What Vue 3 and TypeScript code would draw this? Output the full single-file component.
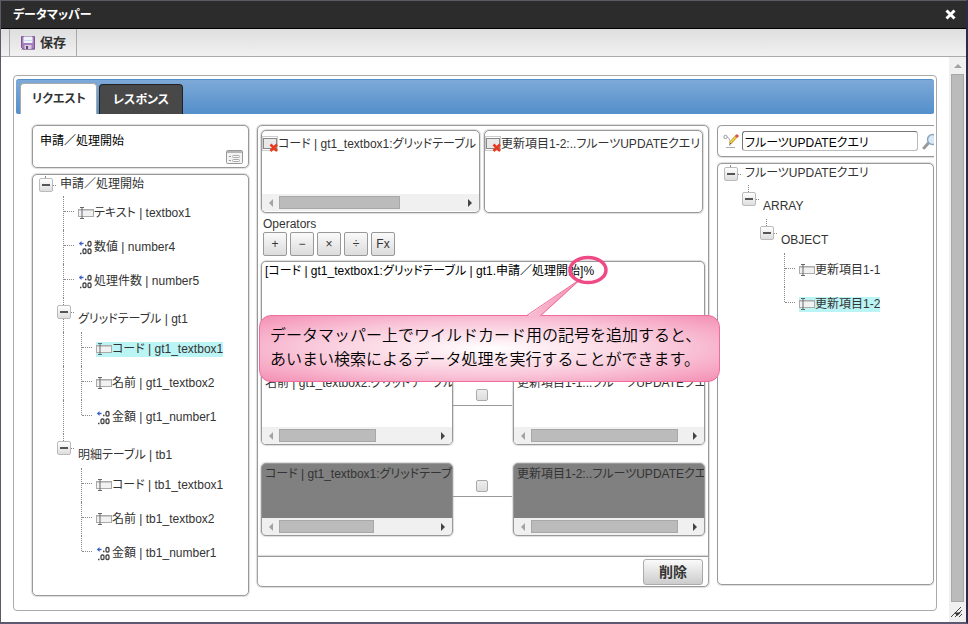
<script setup lang="ts">
import { ref } from 'vue'

type Kind = 'folder' | 'text' | 'number'

interface TreeRow {
  id: string
  label: string
  kind: Kind
  depth: number
  rails?: number[]
  last?: boolean
  joined?: boolean
  selected?: boolean
}

interface Mapping {
  id: string
  from: string
  to: string
  fromThumb: number
  toThumb: number
  active: boolean
}

const sourceTree: TreeRow[] = [
  { id: 's0', label: '申請／処理開始', kind: 'folder', depth: 0, last: true },
  { id: 's1', label: 'テキスト | textbox1', kind: 'text', depth: 1 },
  { id: 's2', label: '数値 | number4', kind: 'number', depth: 1 },
  { id: 's3', label: '処理件数 | number5', kind: 'number', depth: 1 },
  { id: 's4', label: 'グリッドテーブル | gt1', kind: 'folder', depth: 1, joined: true },
  { id: 's5', label: 'コード | gt1_textbox1', kind: 'text', depth: 2, rails: [2], selected: true },
  { id: 's6', label: '名前 | gt1_textbox2', kind: 'text', depth: 2, rails: [2] },
  { id: 's7', label: '金額 | gt1_number1', kind: 'number', depth: 2, rails: [2], last: true },
  { id: 's8', label: '明細テーブル | tb1', kind: 'folder', depth: 1, joined: true, last: true },
  { id: 's9', label: 'コード | tb1_textbox1', kind: 'text', depth: 2 },
  { id: 's10', label: '名前 | tb1_textbox2', kind: 'text', depth: 2 },
  { id: 's11', label: '金額 | tb1_number1', kind: 'number', depth: 2, last: true },
]

const targetTree: TreeRow[] = [
  { id: 't0', label: 'フルーツUPDATEクエリ', kind: 'folder', depth: 0, last: true },
  { id: 't1', label: 'ARRAY', kind: 'folder', depth: 1, last: true },
  { id: 't2', label: 'OBJECT', kind: 'folder', depth: 2, last: true },
  { id: 't3', label: '更新項目1-1', kind: 'text', depth: 3 },
  { id: 't4', label: '更新項目1-2', kind: 'text', depth: 3, last: true, selected: true },
]

const trees = { source: sourceTree, target: targetTree }

const operators = ['+', '−', '×', '÷', 'Fx']

const mappings: Mapping[] = [
  {
    id: 'm1',
    from: '名前 | gt1_textbox2:グリッドテーブル',
    to: '更新項目1-1:..フルーツUPDATEクエリ',
    fromThumb: 62,
    toThumb: 94,
    active: false,
  },
  {
    id: 'm2',
    from: 'コード | gt1_textbox1:グリッドテーブル',
    to: '更新項目1-2:..フルーツUPDATEクエリ',
    fromThumb: 61,
    toThumb: 94,
    active: true,
  },
]

const expression = ref('[コード | gt1_textbox1:グリッドテーブル | gt1.申請／処理開始]%')
const query = ref('フルーツUPDATEクエリ')
const tab = ref<'request' | 'response'>('request')
const checked = ref<string[]>([])
</script>

<template>
  <div class="window">
    <header class="titlebar">
      <h1>データマッパー</h1>
      <button class="close" type="button" aria-label="閉じる">
        <svg width="11" height="11" viewBox="0 0 11 11"><path d="M1.500 1.500L9.500 9.500M9.500 1.500L1.500 9.500" stroke="#fff" stroke-width="3" /></svg>
      </button>
    </header>

    <div class="toolbar">
      <button class="save" type="button">
        <svg width="16" height="16" viewBox="0 0 16 16">
          <path d="M1 14.500H15" stroke="#bbb" />
          <path d="M1.500 1.500H14.500V14H3L1.500 12.500Z" fill="#a77cbd" stroke="#7d5792" />
          <path d="M3.500 1.500H12.500V8H3.500Z" fill="#eef4fa" />
          <path d="M3.500 5.500H12.500" stroke="#cfdbe8" />
          <path d="M4.500 10H11.500V14H4.500Z" fill="#d8cde0" />
          <path d="M6 11H8V14H6Z" fill="#5f4570" />
        </svg>
        <span>保存</span>
      </button>
    </div>

    <div class="viewport">
      <main class="stage">
        <div class="panel">
          <div class="tabs" role="tablist">
            <button class="tab" :class="{ on: tab === 'request' }" role="tab" type="button" @click="tab = 'request'">リクエスト</button>
            <button class="tab" :class="{ on: tab === 'response' }" role="tab" type="button" @click="tab = 'response'">レスポンス</button>
          </div>

          <div class="columns">
            <section class="column side left">
              <div class="box head">
                <span>申請／処理開始</span>
                <svg class="form-icon" width="17" height="14" viewBox="0 0 17 14">
                  <rect x=".5" y=".5" width="16" height="13" rx="1" fill="#f3f3f3" stroke="#999" />
                  <path d="M1 2H16" stroke="#b5b5b5" stroke-width="2" />
                  <path d="M3 6.500H5M3 10.500H5" stroke="#999" />
                  <rect x="6.500" y="5.500" width="7" height="2" rx="1" fill="#fff" stroke="#aaa" />
                  <rect x="6.500" y="9.500" width="7" height="2" rx="1" fill="#fff" stroke="#aaa" />
                </svg>
              </div>
              <ul class="box tree">
                <li v-for="row in trees.source" :key="row.id" class="row" :class="[row.kind, { root: row.depth === 0, leaf: row.kind !== 'folder' }]">
                  <span v-for="n in row.depth" :key="n" class="rail" :class="{ drawn: row.rails?.includes(n) }"></span>
                  <template v-if="row.kind === 'folder'">
                    <span class="knot" :class="{ joined: row.joined, last: row.last }">
                      <button class="toggle" type="button" :aria-label="row.label + 'を閉じる'"></button>
                    </span>
                    <span class="stub"></span>
                    <span class="name">{{ row.label }}</span>
                  </template>
                  <template v-else>
                    <span class="branch" :class="{ last: row.last }"></span>
                    <span class="item" :class="{ selected: row.selected }">
                      <svg v-if="row.kind === 'text'" width="16" height="14" viewBox="0 0 16 14">
                        <rect x=".5" y="3.500" width="15" height="7" fill="#f1f1f1" stroke="#aaa" />
                        <path d="M1 4.500H15" stroke="#ccc" />
                        <path d="M2 1.500H6M2 12.500H6M4 2V12" stroke="#666" fill="none" />
                      </svg>
                      <svg v-else width="16" height="16" viewBox="0 0 16 16">
                        <path d="M1.500 4.500H5.500" stroke="#3a5fc4" stroke-width="1.400" />
                        <path d="M1 4.500L3.500 2V7Z" fill="#3a5fc4" />
                        <path d="M7 6.500H8.500M2 14.500H3.500" stroke="#444" stroke-width="1.500" />
                        <rect x="10" y="2.500" width="3" height="4.500" rx="1.200" fill="none" stroke="#444" stroke-width="1.300" />
                        <rect x="5" y="10" width="3" height="4.500" rx="1.200" fill="none" stroke="#444" stroke-width="1.300" />
                        <rect x="10" y="10" width="3" height="4.500" rx="1.200" fill="none" stroke="#444" stroke-width="1.300" />
                      </svg>
                      <span>{{ row.label }}</span>
                    </span>
                  </template>
                </li>
              </ul>
            </section>

            <section class="column editor">
              <div class="box workspace">
                <div class="pair">
                  <div class="box slot">
                    <div class="slot-text">
                      <svg width="16" height="16" viewBox="0 0 16 16">
                        <rect x=".5" y=".5" width="15" height="14" fill="#fff" stroke="#ccc" />
                        <rect x="1.500" y="2.500" width="13" height="10" fill="#e9e9ec" stroke="#888" />
                        <path d="M8.500 8.500L15 15M15 8.500L8.500 15" stroke="#e8391c" stroke-width="2.500" />
                      </svg>
                      <span>コード | gt1_textbox1:グリッドテーブル | gt1</span>
                    </div>
                    <div class="scroller"><i class="arrow back"></i><div class="track"><div class="thumb" :style="{ width: '66%' }"></div></div><i class="arrow fore"></i></div>
                  </div>
                  <div class="box slot">
                    <div class="slot-text">
                      <svg width="16" height="16" viewBox="0 0 16 16">
                        <rect x=".5" y=".5" width="15" height="14" fill="#fff" stroke="#ccc" />
                        <rect x="1.500" y="2.500" width="13" height="10" fill="#e9e9ec" stroke="#888" />
                        <path d="M8.500 8.500L15 15M15 8.500L8.500 15" stroke="#e8391c" stroke-width="2.500" />
                      </svg>
                      <span>更新項目1-2:..フルーツUPDATEクエリ</span>
                    </div>
                  </div>
                </div>

                <label class="caption" for="expression">Operators</label>
                <div class="operators">
                  <button v-for="op in operators" :key="op" type="button">{{ op }}</button>
                </div>
                <textarea id="expression" v-model="expression" class="box expression" spellcheck="false"></textarea>

                <div v-for="m in mappings" :key="m.id" class="mapping" :class="{ active: m.active }">
                  <div class="box end">
                    <div class="end-text">{{ m.from }}</div>
                    <div class="scroller"><i class="arrow back"></i><div class="track"><div class="thumb" :style="{ width: m.fromThumb + '%' }"></div></div><i class="arrow fore"></i></div>
                  </div>
                  <div class="link">
                    <input v-model="checked" type="checkbox" :value="m.id" :aria-label="m.to" />
                  </div>
                  <div class="box end">
                    <div class="end-text">{{ m.to }}</div>
                    <div class="scroller"><i class="arrow back"></i><div class="track"><div class="thumb" :style="{ width: m.toThumb + '%' }"></div></div><i class="arrow fore"></i></div>
                  </div>
                </div>

                <footer class="actions">
                  <button type="button">削除</button>
                </footer>

                <div class="callout">
                  <p>データマッパー上でワイルドカード用の記号を追加すると、<br />あいまい検索によるデータ処理を実行することができます。</p>
                  <svg class="pointer" width="90" height="62" viewBox="0 0 90 62">
                    <defs>
                      <linearGradient id="tail" x1="0" y1="1" x2="1" y2="0">
                        <stop offset="0" stop-color="#f9bdd2" />
                        <stop offset="1" stop-color="#f390b3" />
                      </linearGradient>
                    </defs>
                    <path d="M5 62L61 23L19 62" fill="url(#tail)" />
                    <path d="M5 61L61 23L19 61" fill="none" stroke="#ee6d9b" />
                    <ellipse cx="67" cy="15" rx="18" ry="12.500" fill="none" stroke="#ee4b86" stroke-width="3.500" />
                  </svg>
                </div>
              </div>
            </section>

            <section class="column side right">
              <div class="box search">
                <svg width="16" height="16" viewBox="0 0 16 16">
                  <circle cx="2.500" cy="4" r="1.700" fill="#fff" stroke="#999" />
                  <path d="M4 4Q6 4 7 8V13M3 14.500H12" fill="none" stroke="#aaa" />
                  <path d="M7 10.500L13.500 3" stroke="#d5ab2b" stroke-width="3" />
                  <path d="M7.500 9.500L13 3.500" stroke="#f7df70" />
                  <path d="M13 4L15 2" stroke="#d9534a" stroke-width="3" />
                  <path d="M6.500 11.500L8 10" stroke="#555" />
                </svg>
                <input v-model="query" type="text" aria-label="クエリ名" />
                <button type="button" aria-label="検索">
                  <svg width="17" height="17" viewBox="0 0 17 17">
                    <path d="M2 15L6 10.500" stroke="#999" stroke-width="3" stroke-linecap="round" />
                    <circle cx="10.500" cy="6.500" r="5" fill="#d8e9f8" stroke="#8ea6bd" stroke-width="1.500" />
                  </svg>
                </button>
              </div>
              <ul class="box tree">
                <li v-for="row in trees.target" :key="row.id" class="row" :class="[row.kind, { root: row.depth === 0, leaf: row.kind !== 'folder' }]">
                  <span v-for="n in row.depth" :key="n" class="rail"></span>
                  <template v-if="row.kind === 'folder'">
                    <span class="knot last"><button class="toggle" type="button" :aria-label="row.label + 'を閉じる'"></button></span>
                    <span class="stub"></span>
                    <span class="name">{{ row.label }}</span>
                  </template>
                  <template v-else>
                    <span class="branch" :class="{ last: row.last }"></span>
                    <span class="item" :class="{ selected: row.selected }">
                      <svg width="16" height="14" viewBox="0 0 16 14">
                        <rect x=".5" y="3.500" width="15" height="7" fill="#f1f1f1" stroke="#aaa" />
                        <path d="M1 4.500H15" stroke="#ccc" />
                        <path d="M2 1.500H6M2 12.500H6M4 2V12" stroke="#666" fill="none" />
                      </svg>
                      <span>{{ row.label }}</span>
                    </span>
                  </template>
                </li>
              </ul>
            </section>
          </div>
        </div>
      </main>

      <div class="vscroll">
        <i class="up"></i>
        <div class="vthumb"></div>
        <svg class="grip" width="17" height="20" viewBox="0 0 17 20">
          <path d="M2 15L12 5M6 15L13 8M10 15L13 12" stroke="#444" fill="none" />
          <path d="M5.500 10.500H12L8 14Z" fill="#333" />
        </svg>
      </div>
    </div>
  </div>
</template>

<style>
body {
  margin: 0;
  background: #5c5a66;
}
</style>

<style scoped>
* {
  box-sizing: border-box;
}

.window {
  display: flex;
  flex-direction: column;
  min-height: 100vh;
  border: 1px solid #5c5a66;
  border-right: 2px solid #2b2a48;
  border-bottom: 2px solid #5c5870;
  background: #fff;
  color: #333;
  font: 12px/16px "Liberation Sans", "Noto Sans CJK JP", sans-serif;
  font-feature-settings: "palt";
}

button,
input,
textarea {
  margin: 0;
  padding: 0;
  color: inherit;
  font: inherit;
  font-feature-settings: inherit;
}

svg {
  display: block;
  flex: none;
}

.titlebar {
  display: flex;
  align-items: center;
  justify-content: space-between;
  height: 28px;
  padding: 0 10px 0 12px;
  border-bottom: 1px solid #000;
  background: #2c2c2c;
  color: #fff;
}

.titlebar h1 {
  margin: 0;
  font-size: 12px;
  line-height: 16px;
}

.close {
  border: 0;
  background: none;
}

.toolbar {
  display: flex;
  height: 28px;
  padding-left: 8px;
  border-bottom: 1px solid #aaa;
  background: linear-gradient(#dedede, #f1f1f1);
}

.save {
  display: flex;
  align-items: center;
  gap: 4px;
  padding: 0 10px;
  border: solid #aaa;
  border-width: 0 1px;
  background: none;
  font-size: 13px;
  font-weight: bold;
}

.viewport {
  display: flex;
  flex: 1;
}

.stage {
  display: flex;
  flex: 1;
  min-width: 0;
  padding: 18px 12px 11px;
}

.panel {
  flex: 1;
  display: flex;
  flex-direction: column;
  min-width: 0;
  padding: 3px 2px 14px;
  border: 1px solid #aaa;
  border-radius: 4px;
}

.tabs {
  display: flex;
  align-items: flex-end;
  gap: 2px;
  height: 35px;
  padding: 0 4px;
  border-radius: 3px 3px 2px 2px;
  border: solid #5590cb;
  border-width: 1px 0;
  background: linear-gradient(#7da9d8, #5590cb);
}

.tab {
  height: 30px;
  margin-bottom: -1px;
  padding: 0 13px;
  border: 1px solid #222;
  border-bottom: 0;
  border-radius: 4px 4px 0 0;
  background: #484848;
  color: #fff;
  font-weight: bold;
}

.tab.on {
  height: 31px;
  padding: 0 10px 0 11px;
  border-color: #aaa;
  background: #fff;
  color: #333;
}

.columns {
  flex: 1;
  display: grid;
  grid-template-columns: 217px minmax(0, 1fr) 217px;
  gap: 8px;
  padding: 11px 0 0 16px;
}

.column {
  display: flex;
  flex-direction: column;
  min-width: 0;
}

.side {
  gap: 6px;
}

.editor {
  padding-bottom: 9px;
}

.right {
  padding-bottom: 11px;
  overflow: hidden;
}

.box {
  border: 1px solid #999;
  border-radius: 5px;
  background: #fff;
  box-shadow: 0 0 1px 1px #ddd;
}

.head {
  display: flex;
  justify-content: space-between;
  height: 43px;
  padding: 7px 5px 3px 7px;
  color: #000;
}

.form-icon {
  align-self: flex-end;
}

.tree {
  flex: 1;
  margin: 0;
  padding: 1px 0 25px;
  list-style: none;
}

.row {
  display: flex;
  height: 34px;
  padding-left: 6px;
  white-space: nowrap;
}

.row.root {
  height: 20px;
}

.row.leaf {
  padding-left: 12px;
}

.rail {
  flex: none;
  width: 18px;
}

.rail.drawn {
  border-left: 1px dotted #888;
}

.knot {
  display: flex;
  flex-direction: column;
  align-items: center;
  width: 14px;
}

.knot::before,
.knot::after {
  content: "";
  height: 7px;
  margin-right: 1px;
  border-left: 1px dotted transparent;
}

.root .knot::before {
  height: 2px;
}

.knot::before {
  border-color: #888;
}

.knot::after {
  flex: 1;
}

.knot.joined:not(.last)::after {
  border-color: #888;
}

.toggle {
  width: 14px;
  height: 14px;
  border: 1px solid #bbb;
  border-radius: 2px;
  background: linear-gradient(#555, #555) center / 8px 2px no-repeat, linear-gradient(#fff, #ddd);
}

.stub {
  width: 3px;
  height: 1px;
  margin: 14px 4px 0 0;
  border-top: 1px dotted #888;
}

.root .stub {
  margin-top: 9px;
}

.name {
  padding-top: 13px;
}

.root .name {
  padding-top: 0;
}

.branch {
  width: 15px;
  border-left: 1px dotted #888;
}

.branch::before {
  content: "";
  display: block;
  width: 10px;
  height: 15px;
  border-bottom: 1px dotted #888;
}

.branch.last {
  height: 15px;
}

.item {
  display: flex;
  align-items: center;
  align-self: center;
  height: 15px;
}

.item.selected {
  background: #bbf4f5;
}

.workspace {
  position: relative;
  flex: 1;
  display: flex;
  flex-direction: column;
  padding: 4px 3px 0;
}

.pair {
  display: grid;
  grid-template-columns: repeat(2, minmax(0, 1fr));
  gap: 4px;
  padding-right: 2px;
}

.slot {
  display: flex;
  flex-direction: column;
  justify-content: space-between;
  height: 83px;
  padding: 5px 0 1px;
  overflow: hidden;
}

.slot-text {
  display: flex;
  align-items: center;
  white-space: nowrap;
  overflow: hidden;
}

.scroller {
  display: flex;
  align-items: center;
  height: 17px;
  background: #f0f0f0;
}

.track {
  flex: 1;
}

.thumb {
  height: 13px;
  border: 1px solid #a8a8a8;
  background: #bbb;
}

.arrow {
  width: 4px;
  height: 8px;
  border: solid transparent;
  border-width: 4px 0;
}

.arrow.back {
  border-right: 4px solid #a3a3a3;
  margin: 0 6px 0 7px;
}

.arrow.fore {
  border-left: 4px solid #444;
  margin: 0 7px 0 6px;
}

.caption {
  padding: 3px 2px 0;
}

.operators {
  display: flex;
  gap: 3px;
  padding: 0 2px;
}

.operators button {
  width: 24px;
  height: 24px;
  border: 1px solid #999;
  border-radius: 2px;
  background: linear-gradient(#fafafa, #dcdcdc);
}

.expression {
  display: block;
  width: 100%;
  height: 103px;
  margin: 5px 0 8px;
  padding: 1px 3px;
  resize: none;
  color: #000;
}

.mapping {
  display: grid;
  grid-template-columns: minmax(0, 1fr) 60px minmax(0, 1fr);
  margin-bottom: 18px;
}

.end {
  display: flex;
  flex-direction: column;
  justify-content: space-between;
  height: 73px;
  overflow: hidden;
}

.end-text {
  padding: 2px 2px 0 3px;
  overflow: hidden;
  white-space: nowrap;
}

.active .end {
  background: #808080;
}

.link {
  display: flex;
  align-items: flex-end;
  justify-content: center;
  height: 34px;
  padding-bottom: 4px;
  border-bottom: 1px solid #999;
}

.link input {
  appearance: none;
  width: 12px;
  height: 12px;
  margin-right: 3px;
  border: 1px solid #aaa;
  border-radius: 2px;
  background: linear-gradient(#eee, #ddd);
}

.actions {
  display: flex;
  justify-content: flex-end;
  margin: auto -3px 0;
  padding: 2px 5px 1px;
  border-top: 1px solid #999;
  box-shadow: 0 -1px 1px #ddd;
}

.actions button {
  width: 60px;
  height: 26px;
  border: 1px solid #aaa;
  border-radius: 3px;
  background: linear-gradient(#fafafa, #ccc);
  font-size: 14px;
  font-weight: bold;
}

.callout {
  position: absolute;
  top: 189px;
  left: 1px;
  width: 461px;
  padding: 6px 10px 11px;
  border: 1px solid #ee6d9b;
  border-radius: 12px;
  background: radial-gradient(ellipse at center, #fff 0%, #f9c4d7 60%, #f48fb4 100%);
  color: #000;
  z-index: 1;
}

.callout p {
  margin: 0;
  font: 350 16px/24px "Noto Sans CJK JP", sans-serif;
  font-feature-settings: normal;
  white-space: nowrap;
}

.pointer {
  position: absolute;
  top: -61px;
  left: 261px;
}

.search {
  display: flex;
  align-items: center;
  gap: 3px;
  width: 225px;
  height: 32px;
  padding-left: 5px;
}

.search input {
  width: 176px;
  height: 20px;
  padding: 0 2px;
  border: 1px solid #bbb;
  border-top-color: #777;
  border-left-color: #777;
  border-radius: 3px;
  background: #fff;
  color: #000;
}

.search button {
  padding-left: 1px;
  border: 0;
  background: none;
}

.vscroll {
  display: flex;
  flex-direction: column;
  align-items: center;
  width: 17px;
  background: #f0f0f0;
}

.up {
  margin: 7px 0 6px;
  border: solid transparent;
  border-width: 0 4px 4px;
  border-bottom-color: #a3a3a3;
}

.vthumb {
  flex: 1;
  width: 13px;
  border: 1px solid #a8a8a8;
  background: #bbb;
}
</style>
